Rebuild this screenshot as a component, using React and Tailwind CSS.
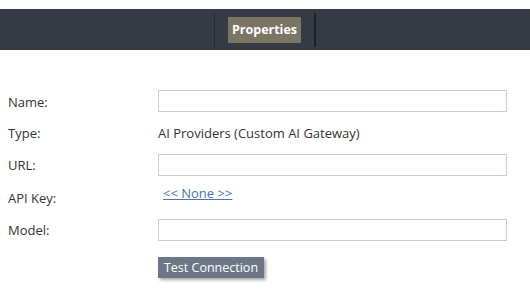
export default function App() {
  const font = { fontFamily: '"Open Sans", "Noto Sans", sans-serif' };

  return (
    <div
      className="h-[302px] w-[530px] bg-white pt-[9px] text-[13px] leading-[18px] text-[#333]"
      style={font}
    >
      <div className="flex h-[41px] items-center justify-center bg-[#363a44]">
        <div className="h-[36px] w-px bg-[#2a2d35]" />
        <div className="mx-[13px] flex h-[26px] w-[73px] items-center justify-center bg-[#7b7565] text-[12.5px] font-bold text-white">
          Properties
        </div>
        <div className="h-[34px] w-[2px] bg-[#1e2027]" />
      </div>

      <div className="flex flex-col pl-[8px] pt-[40px]">
        <div className="flex h-[22px] items-center">
          <div className="w-[150px] pt-px">Name:</div>
          <input className="h-[22px] w-[349px] border border-[#cbc9dc] bg-white outline-none" />
        </div>

        <div className="mt-[10px] flex h-[22px] items-center">
          <div className="w-[150px]">Type:</div>
          <div>AI Providers (Custom AI Gateway)</div>
        </div>

        <div className="mt-[10px] flex h-[22px] items-center">
          <div className="w-[150px]">URL:</div>
          <input className="h-[22px] w-[349px] border border-[#cbc9dc] bg-white outline-none" />
        </div>

        <div className="mt-[8px] flex items-start">
          <div className="w-[150px] pt-[5px]">API Key:</div>
          <a href="#" className="ml-[5px] text-[#4a72b4] underline">
            &lt;&lt; None &gt;&gt;
          </a>
        </div>

        <div className="mt-[12px] flex h-[22px] items-center">
          <div className="w-[150px]">Model:</div>
          <input className="h-[22px] w-[349px] border border-[#cbc9dc] bg-white outline-none" />
        </div>

        <div className="mt-[16px] flex">
          <div className="w-[150px]" />
          <button className="flex h-[21px] w-[106px] items-center justify-center bg-[#6d7686] text-[12.5px] text-white shadow-[2px_2px_3px_rgba(0,0,0,0.35)]">
            Test Connection
          </button>
        </div>
      </div>
    </div>
  );
}
